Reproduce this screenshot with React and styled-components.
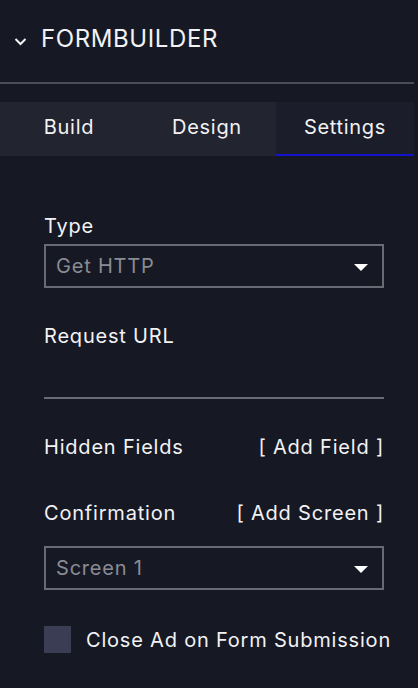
import { useState } from "react";
import styled, { createGlobalStyle } from "styled-components";

const GlobalStyle = createGlobalStyle`
  body {
    margin: 0;
    background-color: #161924;
    font-family: "Inter", "Noto Sans", sans-serif;
    color: #f2f2f4;
    letter-spacing: 0.8px;
  }
`;

const Panel = styled.div`
  width: 418px;
  min-height: 688px;
  background-color: #161924;
`;

const Header = styled.div`
  height: 82px;
  display: flex;
  align-items: center;
  padding-left: 14px;
  gap: 14px;
  box-sizing: border-box;
`;

const Title = styled.h1`
  margin: 0;
  font-size: 24px;
  font-weight: 400;
  letter-spacing: 0.6px;
  line-height: 1;
  padding-bottom: 4px;
`;

const Divider = styled.div`
  width: 414px;
  height: 2px;
  background-color: #4a4c56;
`;

const Tabs = styled.div`
  margin-top: 18px;
  width: 414px;
  display: grid;
  grid-template-columns: repeat(3, 1fr);
  background-color: #22242f;
`;

const Tab = styled.button`
  height: 54px;
  border: none;
  border-bottom: 2px solid ${(props) => (props.active ? "#1313cc" : "transparent")};
  background-color: ${(props) => (props.active ? "#1b1d2a" : "transparent")};
  color: #f2f2f4;
  font-family: inherit;
  font-size: 20px;
  letter-spacing: 0.7px;
  padding: 0 0 2px;
  cursor: pointer;
`;

const Content = styled.div`
  padding: 58px 34px 0 44px;
  display: flex;
  flex-direction: column;
`;

const Label = styled.div`
  font-size: 20px;
  line-height: 24px;
  margin-top: ${(props) => props.gap || 0}px;
`;

const Row = styled.div`
  display: flex;
  justify-content: space-between;
  align-items: center;
  font-size: 20px;
  line-height: 24px;
  margin-top: ${(props) => props.gap || 0}px;
`;

const Action = styled.span`
  cursor: pointer;
`;

const Select = styled.div`
  height: 44px;
  margin-top: ${(props) => props.gap || 0}px;
  border: 2px solid #686a74;
  box-sizing: border-box;
  display: flex;
  align-items: center;
  justify-content: space-between;
  padding: 0 14px 0 10px;
  color: #8a8b94;
  font-size: 20px;
`;

const Arrow = styled.span`
  width: 0;
  height: 0;
  border-left: 7px solid transparent;
  border-right: 7px solid transparent;
  border-top: 7px solid #ffffff;
  margin-top: 2px;
`;

const UrlInput = styled.div`
  height: 51px;
  border-bottom: 2px solid #686a74;
  box-sizing: border-box;
`;

const CheckRow = styled.label`
  display: flex;
  align-items: center;
  gap: 15px;
  margin-top: 36px;
  font-size: 20px;
  white-space: nowrap;
  cursor: pointer;
`;

const Box = styled.span`
  flex: none;
  width: 27px;
  height: 27px;
  background-color: ${(props) => (props.checked ? "#1313cc" : "#3b3d55")};
`;

function Chevron() {
  return (
    <svg width="13" height="9" viewBox="0 0 13 9">
      <path
        d="M1.5 2 L6.5 7 L11.5 2"
        fill="none"
        stroke="#f2f2f4"
        strokeWidth="2"
      />
    </svg>
  );
}

function App() {
  const [tab, setTab] = useState("Settings");
  const [checked, setChecked] = useState(false);
  return (
    <Panel>
      <GlobalStyle />
      <Header>
        <Chevron />
        <Title>FORMBUILDER</Title>
      </Header>
      <Divider />
      <Tabs>
        {["Build", "Design", "Settings"].map((name) => (
          <Tab key={name} active={tab === name} onClick={() => setTab(name)}>
            {name}
          </Tab>
        ))}
      </Tabs>
      <Content>
        <Label>Type</Label>
        <Select gap={6}>
          Get HTTP
          <Arrow />
        </Select>
        <Label gap={36}>Request URL</Label>
        <UrlInput />
        <Row gap={36}>
          Hidden Fields
          <Action>[ Add Field ]</Action>
        </Row>
        <Row gap={42}>
          Confirmation
          <Action>[ Add Screen ]</Action>
        </Row>
        <Select gap={21}>
          Screen 1
          <Arrow />
        </Select>
        <CheckRow onClick={() => setChecked((prev) => !prev)}>
          <Box checked={checked} />
          Close Ad on Form Submission
        </CheckRow>
      </Content>
    </Panel>
  );
}

export default App;
